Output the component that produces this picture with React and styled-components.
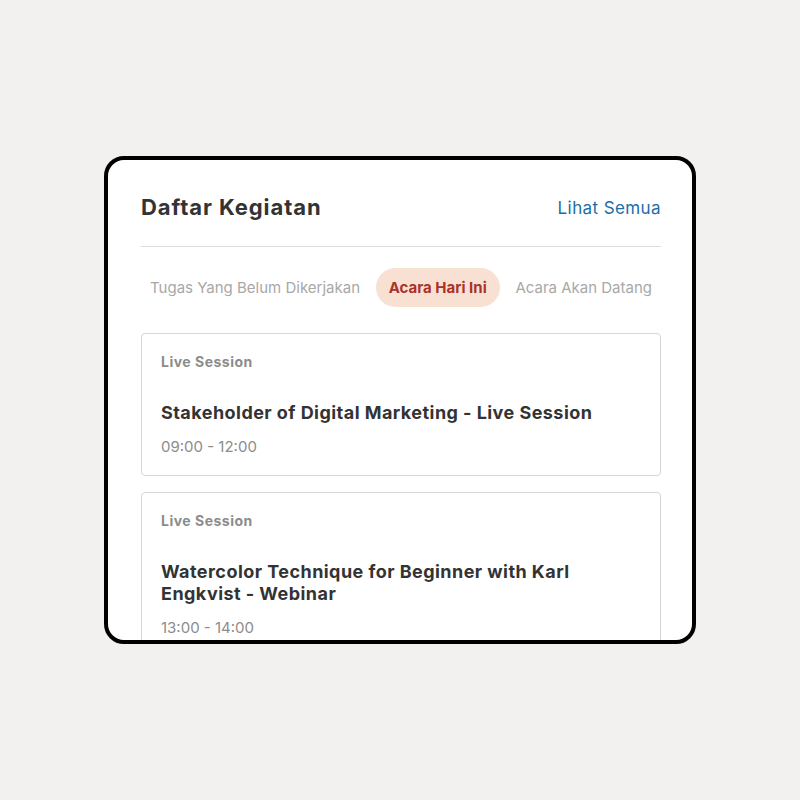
import React from 'react';
import styled, { createGlobalStyle } from 'styled-components';

const GlobalStyle = createGlobalStyle`
  html, body {
    margin: 0;
    padding: 0;
    background: #f2f1ef;
    font-family: Inter, "Noto Sans", "Liberation Sans", sans-serif;
  }
`

const Page = styled.div`
  width: 800px;
  height: 800px;
  display: flex;
  align-items: center;
  justify-content: center;
`

const Frame = styled.div`
  box-sizing: border-box;
  width: 592px;
  height: 488px;
  border: 4px solid #000;
  border-radius: 20px;
  background: #fff;
  overflow: hidden;
  padding: 34px 31px 0 33px;
`

const Header = styled.div`
  display: flex;
  justify-content: space-between;
  align-items: center;
  padding-bottom: 25px;
  border-bottom: 1px solid #dcdcdc;
`

const Title = styled.h2`
  margin: 0;
  font-size: 22px;
  line-height: 27px;
  font-weight: 700;
  letter-spacing: 0.9px;
  color: #333;
`

const SeeAll = styled.a`
  font-size: 17px;
  letter-spacing: 0.4px;
  color: #1b6ea8;
  text-decoration: none;
  cursor: pointer;
`

const Tabs = styled.div`
  display: flex;
  justify-content: space-between;
  align-items: center;
  margin-top: 21px;
`

const Tab = styled.button`
  border: none;
  height: 39px;
  padding: 0 ${p => (p.$active ? '13px' : '9px')};
  border-radius: 20px;
  background: ${p => (p.$active ? '#f8e1d3' : 'transparent')};
  color: ${p => (p.$active ? '#a9332b' : '#a8a8a8')};
  font-family: inherit;
  font-size: 15px;
  font-weight: ${p => (p.$active ? 700 : 400)};
  cursor: pointer;
`

const List = styled.div`
  display: flex;
  flex-direction: column;
  gap: 16px;
  margin-top: 26px;
`

const Card = styled.div`
  border: 1px solid #d6d6d6;
  border-radius: 4px;
  padding: 19px 19px 19px;
`

const Label = styled.div`
  font-size: 14px;
  line-height: 18px;
  font-weight: 700;
  letter-spacing: 0.5px;
  color: #8c8c8c;
`

const EventTitle = styled.div`
  margin-top: 31px;
  font-size: 18px;
  line-height: 22px;
  font-weight: 700;
  letter-spacing: 0.45px;
  color: #333;
`

const Time = styled.div`
  margin-top: 14px;
  font-size: 15px;
  line-height: 18px;
  color: #8c8c8c;
`

const tabs = ['Tugas Yang Belum Dikerjakan', 'Acara Hari Ini', 'Acara Akan Datang'];

const events = [
  { type: 'Live Session', title: 'Stakeholder of Digital Marketing - Live Session', time: '09:00 - 12:00' },
  { type: 'Live Session', title: 'Watercolor Technique for Beginner with Karl Engkvist - Webinar', time: '13:00 - 14:00' },
];

const App = () => {
  return (
    <Page>
      <GlobalStyle />
      <Frame>
        <Header>
          <Title>Daftar Kegiatan</Title>
          <SeeAll>Lihat Semua</SeeAll>
        </Header>
        <Tabs>
          {tabs.map((t, i) => (
            <Tab key={t} $active={i === 1}>{t}</Tab>
          ))}
        </Tabs>
        <List>
          {events.map(e => (
            <Card key={e.title}>
              <Label>{e.type}</Label>
              <EventTitle>{e.title}</EventTitle>
              <Time>{e.time}</Time>
            </Card>
          ))}
        </List>
      </Frame>
    </Page>
  );
};

export default App;
